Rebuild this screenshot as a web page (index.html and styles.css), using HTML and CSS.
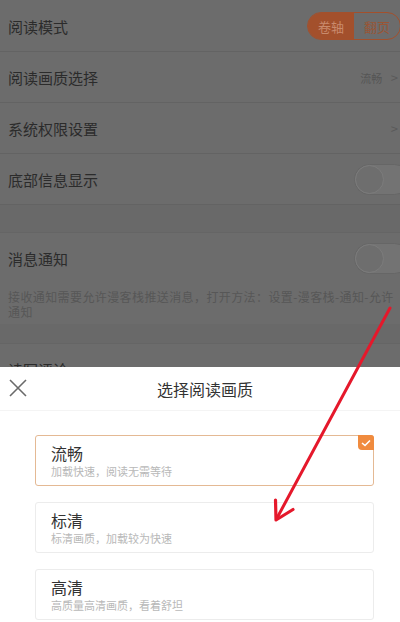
FILE: index.html
```html
<!DOCTYPE html>
<html lang="zh-CN">
<head>
    <meta charset="UTF-8">
    <meta name="viewport" content="width=device-width, initial-scale=1.0">
    <title>选择阅读画质</title>
    <link rel="stylesheet" href="styles.css">
</head>
<body>
    <div class="page">
        <div class="settings">
            <div class="row">
                <span class="label">阅读模式</span>
                <div class="segment">
                    <span class="seg active">卷轴</span>
                    <span class="seg">翻页</span>
                </div>
            </div>
            <div class="row">
                <span class="label">阅读画质选择</span>
                <span class="value">流畅 <span class="chev">&gt;</span></span>
            </div>
            <div class="row">
                <span class="label">系统权限设置</span>
                <span class="value"><span class="chev">&gt;</span></span>
            </div>
            <div class="row">
                <span class="label">底部信息显示</span>
                <span class="toggle"><span class="knob"></span></span>
            </div>
            <div class="band"></div>
            <div class="row no-line">
                <span class="label">消息通知</span>
                <span class="toggle"><span class="knob"></span></span>
            </div>
            <p class="desc">接收通知需要允许漫客栈推送消息，打开方法：设置-漫客栈-通知-允许通知</p>
            <div class="band short"></div>
            <div class="row no-line">
                <span class="label">读写评论</span>
            </div>
        </div>

        <div class="sheet">
            <div class="sheet-head">
                <svg class="close" width="20" height="20" viewBox="0 0 20 20">
                    <path d="M2 2 L18 18 M18 2 L2 18" stroke="#6a6a6a" stroke-width="1.6" fill="none"/>
                </svg>
                <h2>选择阅读画质</h2>
            </div>
            <div class="options">
                <div class="option selected">
                    <div class="opt-title">流畅</div>
                    <div class="opt-sub">加载快速，阅读无需等待</div>
                    <span class="badge">
                        <svg width="10" height="8" viewBox="0 0 10 8">
                            <path d="M1 4 L4 6.5 L9 1.5" stroke="#fff" stroke-width="1.6" fill="none"/>
                        </svg>
                    </span>
                </div>
                <div class="option">
                    <div class="opt-title">标清</div>
                    <div class="opt-sub">标清画质，加载较为快速</div>
                </div>
                <div class="option">
                    <div class="opt-title">高清</div>
                    <div class="opt-sub">高质量高清画质，看着舒坦</div>
                </div>
            </div>
        </div>

        <svg class="arrow" width="400" height="622" viewBox="0 0 400 622">
            <path d="M390 308 L277 518" stroke="#e5182b" stroke-width="3" fill="none" stroke-linecap="round"/>
            <path d="M275.5 500 L276 520 L293 509.5" stroke="#e5182b" stroke-width="3.2" fill="none" stroke-linecap="round" stroke-linejoin="round"/>
        </svg>
    </div>
</body>
</html>
```

FILE: styles.css
```css
* {
    margin: 0;
    padding: 0;
    box-sizing: border-box;
}

body {
    font-family: "Noto Sans CJK SC", "Noto Sans", sans-serif;
    background: #ffffff;
}

.page {
    width: 400px;
    height: 622px;
    overflow: hidden;
    position: relative;
    display: flex;
    flex-direction: column;
}

/* dimmed settings page behind the sheet */

.settings {
    height: 367px;
    flex-shrink: 0;
    overflow: hidden;
    background: #6c6c6c;
    padding-top: 1px;
}

.row {
    height: 51px;
    display: flex;
    align-items: center;
    justify-content: space-between;
    padding-left: 8px;
    border-bottom: 1px solid #636363;
}

.row.no-line {
    border-bottom: none;
}

.label {
    font-size: 15px;
    color: #2b2b2b;
}

.segment {
    display: flex;
    width: 94px;
    height: 28px;
    margin-right: -1px;
    border: 1px solid #a3502c;
    border-radius: 14px;
    overflow: hidden;
}

.seg {
    flex: 1;
    display: flex;
    align-items: center;
    justify-content: center;
    font-size: 13px;
    color: #9a5535;
}

.seg.active {
    background: #a3502c;
    color: #c98a6c;
}

.value {
    font-size: 11px;
    color: #555555;
    padding-right: 2px;
}

.chev {
    font-size: 13px;
    color: #5a5a5a;
    margin-left: 6px;
}

.toggle {
    width: 56px;
    height: 31px;
    margin-right: -10px;
    border-radius: 16px;
    background: #737373;
    border: 1px solid #666666;
    display: flex;
    align-items: center;
}

.knob {
    width: 29px;
    height: 29px;
    border-radius: 50%;
    background: #6e6e6e;
    border: 1px solid #7c7c7c;
}

.band {
    height: 28px;
    background: #696969;
    border-bottom: 1px solid #656565;
}

.band.short {
    height: 20px;
}

.desc {
    font-size: 12px;
    line-height: 15px;
    color: #575757;
    padding: 5px 4px 5px 8px;
    letter-spacing: 0.4px;
}

/* bottom sheet */

.sheet {
    flex: 1;
    background: #ffffff;
}

.sheet-head {
    height: 44px;
    display: flex;
    align-items: center;
    justify-content: center;
    position: relative;
    border-bottom: 1px solid #f4f4f4;
}

.close {
    position: absolute;
    left: 8px;
    top: 11px;
}

.sheet-head h2 {
    font-size: 16px;
    font-weight: 400;
    color: #333333;
    margin-left: 10px;
}

.options {
    padding: 24px 26px 0 35px;
    display: flex;
    flex-direction: column;
    gap: 16px;
}

.option {
    height: 51px;
    border: 1px solid #ececec;
    border-radius: 3px;
    padding: 6px 15px 0;
    position: relative;
}

.option.selected {
    border-color: #e4b994;
}

.opt-title {
    font-size: 16px;
    line-height: 22px;
    color: #333333;
}

.opt-sub {
    font-size: 11px;
    line-height: 15px;
    color: #b8b8b8;
}

.badge {
    position: absolute;
    top: -1px;
    right: -1px;
    width: 16px;
    height: 15px;
    background: #f08b3e;
    border-radius: 0 3px 0 4px;
    display: flex;
    align-items: center;
    justify-content: center;
}

.arrow {
    position: absolute;
    left: 0;
    top: 0;
    pointer-events: none;
}
```
